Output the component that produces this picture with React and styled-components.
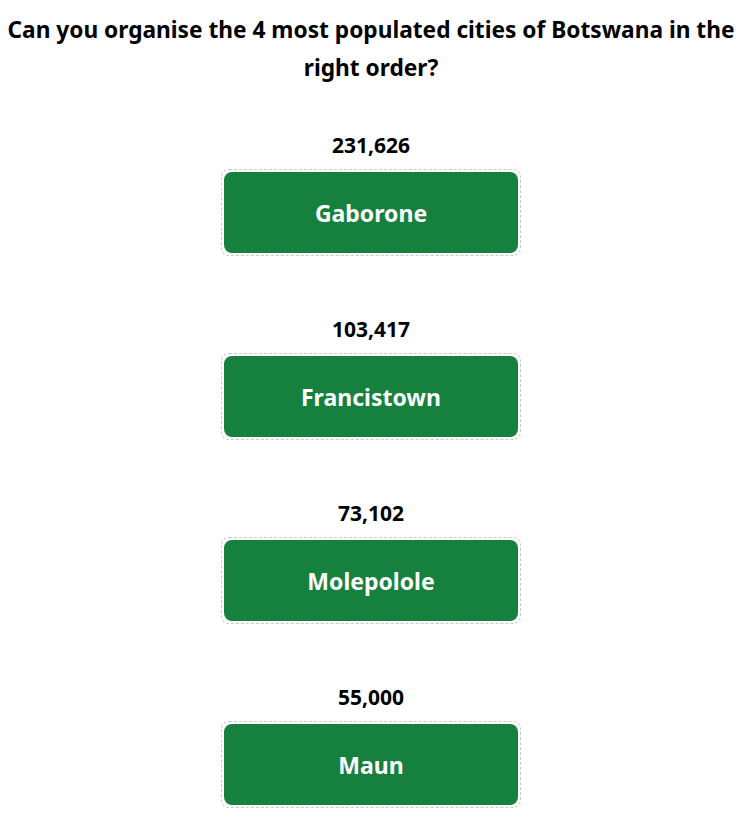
import React from 'react'
import styled, { createGlobalStyle } from 'styled-components'

const cities = [
    { name: 'Gaborone', population: '231,626' },
    { name: 'Francistown', population: '103,417' },
    { name: 'Molepolole', population: '73,102' },
    { name: 'Maun', population: '55,000' },
]

const GlobalStyle = createGlobalStyle`
    body {
        margin: 0;
        background: #ffffff;
        font-family: "Noto Sans", "Open Sans", sans-serif;
        color: #000000;
    }
`

function App() {
    return (
        <Page>
            <GlobalStyle />
            <Title>Can you organise the 4 most populated cities of Botswana in the right order?</Title>
            <List>
                {cities.map(city => (
                    <Group key={city.name}>
                        <Population>{city.population}</Population>
                        <Slot>
                            <CityButton>{city.name}</CityButton>
                        </Slot>
                    </Group>
                ))}
            </List>
        </Page>
    )
}

const Page = styled.div`
    display: flex;
    flex-direction: column;
    align-items: center;
    padding-top: 11px;
    padding-left: 2px;
`

const Title = styled.h2`
    margin: 0;
    width: 738px;
    box-sizing: border-box;
    padding: 0 2px;
    text-align: center;
    font-size: 22.7px;
    line-height: 38px;
    font-weight: 700;
`

const List = styled.div`
    display: flex;
    flex-direction: column;
    gap: 61px;
    margin-top: 46px;
`

const Group = styled.div`
    display: flex;
    flex-direction: column;
    align-items: center;
    gap: 11px;
`

const Population = styled.div`
    font-size: 21px;
    line-height: 25px;
    font-weight: 700;
`

const Slot = styled.div`
    width: 300px;
    height: 87px;
    box-sizing: border-box;
    padding: 2px;
    border: 1px dashed #c8c8c8;
    border-radius: 8px;
`

const CityButton = styled.div`
    display: flex;
    align-items: center;
    justify-content: center;
    height: 100%;
    padding-top: 1px;
    box-sizing: border-box;
    background: #16803f;
    border-radius: 8px;
    color: #ffffff;
    font-size: 23px;
    font-weight: 700;
`

export default App
